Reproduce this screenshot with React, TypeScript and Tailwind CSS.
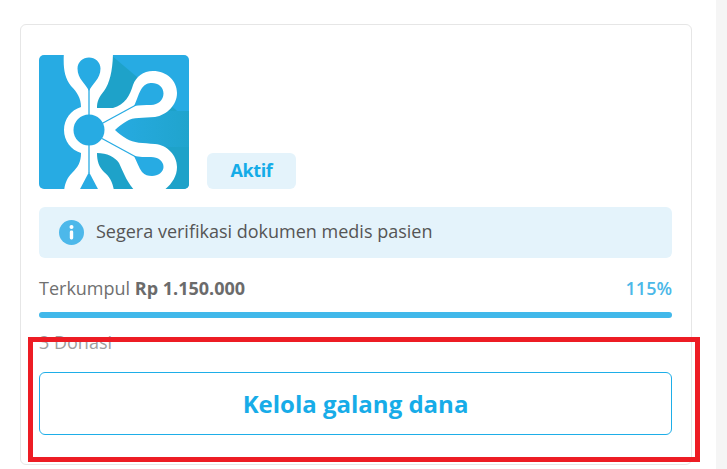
export default function App() {
  return (
    <div className="relative flex h-[469px] w-[727px] overflow-hidden bg-white font-['Open_Sans',sans-serif]">
      <main className="w-[716px] pl-5 pt-6">
        <section className="flex h-[441px] w-[672px] flex-col rounded-md border border-[#e6e6e6] pl-[18px] pr-[19px] pt-[30px]">
          <div className="flex items-end gap-[18px]">
            <svg viewBox="0 0 150 134" className="h-[134px] w-[150px]">
              <defs>
                <clipPath id="logoClip">
                  <rect width="150" height="134" rx="5" />
                </clipPath>
                <linearGradient id="notch" x1="0" x2="1" y1="0" y2="0">
                  <stop offset="0" stopColor="#27abe3" />
                  <stop offset="1" stopColor="#20a4cd" />
                </linearGradient>
              </defs>
              <g clipPath="url(#logoClip)">
                <rect width="150" height="134" fill="#27abe3" />
                <path d="M72 0 L150 66 V134 H56 V40 Z" fill="#1ea2c9" />
                <path d="M70 56 H150 V92 H70 Z" fill="url(#notch)" />
                <path
                  fill="#fff"
                  d="M25 -4 C24 12 25 22 32 31 C38 37 42 43 42 52 C32 55 25 64 25 75 C25 86 32 95 42 98 C42 107 39 112 33 118 C28 123 26 128 25 136 H75 C74 128 71 122 65 117 C60 112 58 106 58 98 C68 98 76 102 80 108 C84 116 87 126 96 136 H124 C132 130 138 122 138 112 C138 100 128 90 116 89 C104 88 94 88 88 84 C83 81 79 78 76 75 C79 72 83 69 88 66 C94 62 104 63 116 62 C128 60 138 50 138 38 C138 26 128 16 114 16 C104 16 97 22 94 30 C91 40 86 50 74 53 H58 C58 46 60 42 65 36 C71 28 74 14 74 -4 Z"
                />
                <g fill="#27abe3">
                  <circle cx="50" cy="75" r="15.5" />
                  <path d="M50 36 C47 29 38.5 24 38.5 13.5 C38.5 7 44 2.5 50 2.5 C56 2.5 61.5 7 61.5 13.5 C61.5 24 53 29 50 36 Z" />
                  <path d="M50 117 L60 136 H40 Z" />
                  <path d="M95 51 C98 45 100 37 103 33 C106 29 109 28 113 28 C119 28 124.5 32 124.5 38.5 C124.5 45 119 50 112 50 C106 50 100 50 95 51 Z" />
                  <path d="M95 101 C100 102 106 102 112 102 C119 102 124.5 106 124.5 112 C124.5 117 119 121 113 121 C109 121 106 120 103 117 C100 113 98 107 95 101 Z" />
                </g>
                <g stroke="#27abe3" strokeWidth="1.3" fill="none">
                  <path d="M50 34 V62" />
                  <path d="M50 88 V118" />
                  <path d="M63 68.5 L97 50" />
                  <path d="M63 83.5 L97 102" />
                </g>
              </g>
            </svg>
            <span className="flex h-9 w-[89px] items-center justify-center rounded-md bg-[#e4f3fb] text-[18px] font-bold text-[#14ace8]">
              <span className="-translate-y-px tracking-[-0.4px]">Aktif</span>
            </span>
          </div>
          <div className="mt-[18px] flex h-[51px] items-center gap-3 rounded-md bg-[#e4f3fb] pl-5">
            <svg viewBox="0 0 25 25" className="h-[25px] w-[25px]">
              <circle cx="12.5" cy="12.5" r="12.5" fill="#4db8ea" />
              <circle cx="12.5" cy="7" r="2" fill="#fff" />
              <rect x="10.8" y="10.5" width="3.4" height="9" rx="1.4" fill="#fff" />
            </svg>
            <span className="pb-[3px] text-[18px] leading-none text-[#555]">Segera verifikasi dokumen medis pasien</span>
          </div>
          <div className="mt-[19px] flex h-[22px] items-center justify-between text-[18px] leading-none">
            <span className="text-[#707070]">
              Terkumpul <b className="font-bold text-[#6b6b6b]">Rp 1.150.000</b>
            </span>
            <span className="font-semibold text-[#4cb8e8]">115%</span>
          </div>
          <div className="mt-[13px] h-1.5 rounded-full bg-[#41b8ea]" />
          <div className="mt-[15px] h-[18px] text-[18px] leading-[18px] text-[#9e9e9e]">3 Donasi</div>
          <button className="mt-[21px] flex h-[63px] items-center justify-center rounded-md border border-[#1eaee8] bg-white text-[24px] font-bold text-[#17ace8]">
            Kelola galang dana
          </button>
        </section>
      </main>
      <div className="flex-1 bg-[#f5f5f5]" />
      <div className="absolute left-[28px] top-[337px] h-[125px] w-[672px] border-[5px] border-[#ed1c24]" />
    </div>
  );
}
